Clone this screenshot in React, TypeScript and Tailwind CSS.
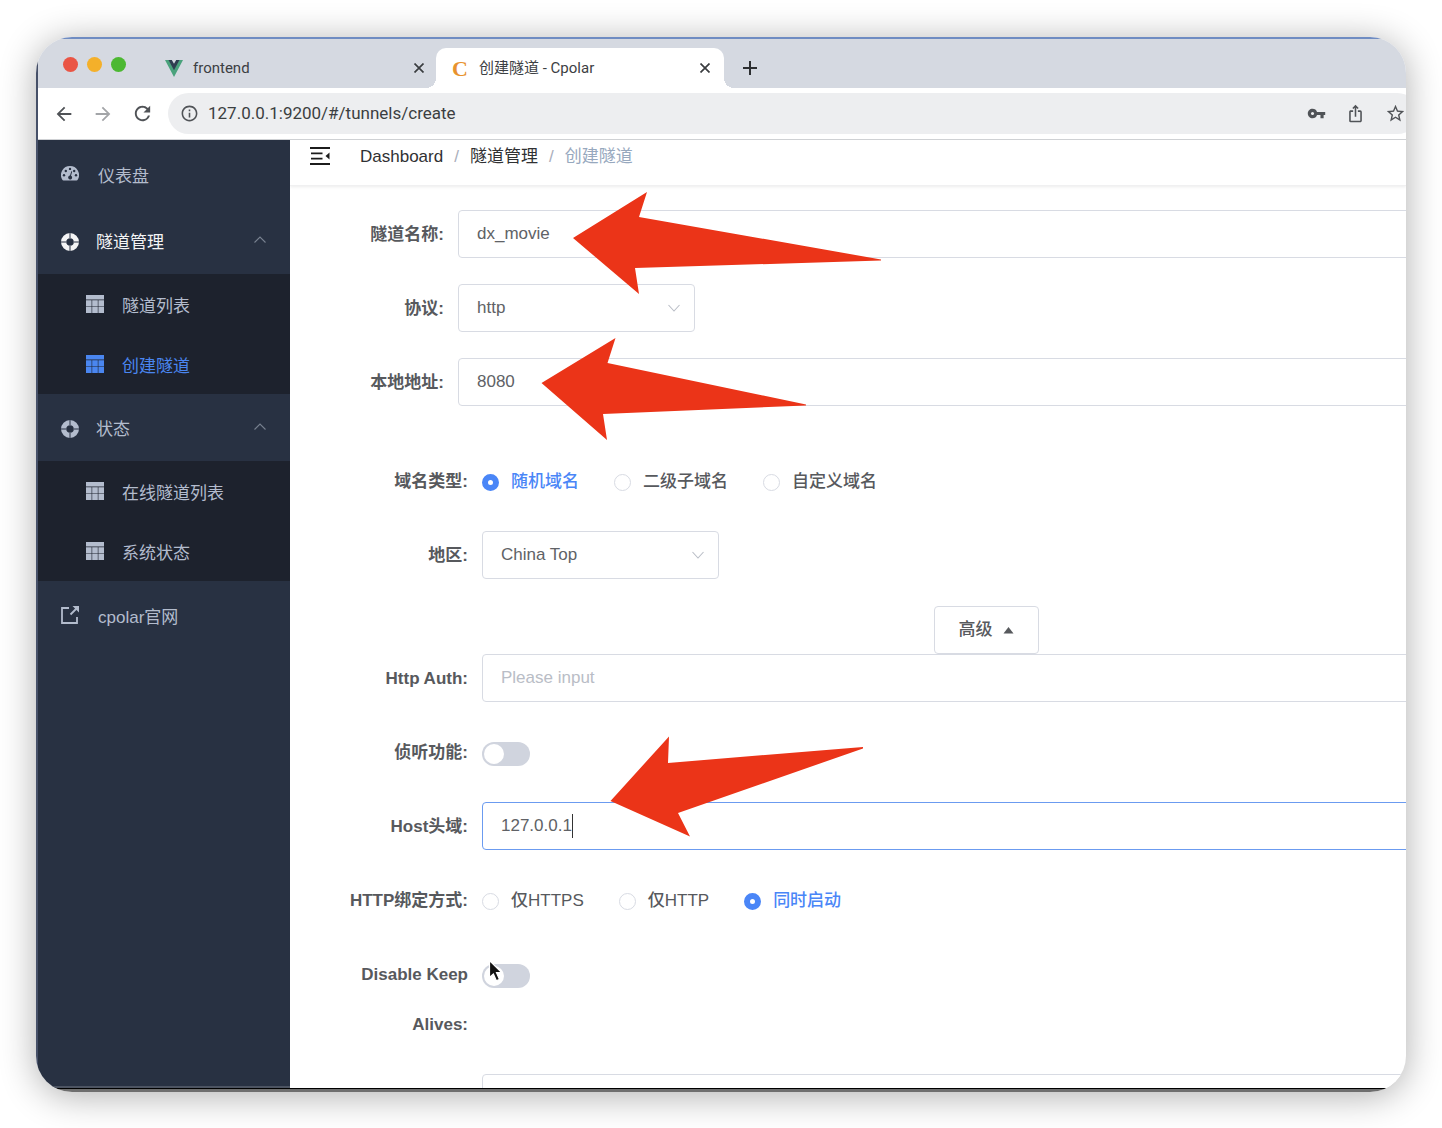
import React, { useState } from 'react';
import clsx from 'clsx';
import {
  MdArrowBack,
  MdArrowForward,
  MdInfoOutline,
  MdIosShare,
  MdRefresh,
  MdStarBorder,
  MdVpnKey,
} from 'react-icons/md';

const uiFont = "font-['Liberation_Sans','Noto_Sans_CJK_SC',sans-serif]";
const chromeFont = "font-[Roboto,'Noto_Sans_CJK_SC',sans-serif]";
const inputStyles =
  'h-12 w-full rounded-[4px] border bg-white px-[18px] text-[17px] text-[#606266] outline-none placeholder:text-[#b9bdc6]';

const VueLogo = () => (
  <svg width="18" height="17" viewBox="0 0 18 17" aria-hidden="true">
    <path d="M0 0h4l5 9 5-9h4L9 17z" fill="#4aa27c" />
    <path d="M3.500 0h3.300L9 3.800 11.200 0h3.300L9 10.200z" fill="#2f3e50" />
  </svg>
);

const CloseIcon = () => (
  <svg width="10" height="10" viewBox="0 0 10 10" stroke="#3a3d40" strokeWidth="1.7" aria-hidden="true">
    <path d="M0.500 0.500l9 9M9.500 0.500l-9 9" />
  </svg>
);

const GaugeIcon = () => (
  <svg width="18" height="15" viewBox="0 0 18 15" aria-hidden="true">
    <path d="M9 0a9 9 0 0 1 7.800 13.500c-.3.500-.7 1-1.300 1h-13c-.6 0-1-.5-1.300-1A9 9 0 0 1 9 0z" fill="currentColor" />
    <g fill="#283142">
      <circle cx="3" cy="9.200" r="1.200" />
      <circle cx="4.800" cy="5" r="1.200" />
      <circle cx="9" cy="2.900" r="1.200" />
      <circle cx="13.200" cy="5" r="1.200" />
      <circle cx="15" cy="9.200" r="1.200" />
      <path d="M10.300 5.200l.9.300-1.200 4.200a2 2 0 1 1-1-.2z" />
    </g>
  </svg>
);

const RingIcon = () => (
  <svg width="18" height="18" viewBox="0 0 18 18" aria-hidden="true">
    <circle cx="9" cy="9" r="6.400" fill="none" stroke="currentColor" strokeWidth="5.200" />
    <path d="M9 0v5M9 13v5M0 9h5M13 9h5" stroke="#283142" strokeWidth="1" />
  </svg>
);

const GridIcon = () => (
  <svg width="18" height="18" viewBox="0 0 18 18" fill="currentColor" aria-hidden="true">
    <path d="M0 0h18v4.500H0zM0 5.200h5.600v6H0zM6.200 5.200h5.600v6H6.200zM12.400 5.200H18v6h-5.600zM0 11.800h5.600V18H0zM6.200 11.800h5.600V18H6.200zM12.400 11.800H18V18h-5.600z" />
  </svg>
);

const LinkIcon = () => (
  <svg width="18" height="18" viewBox="0 0 18 18" fill="none" stroke="currentColor" strokeWidth="1.800" aria-hidden="true">
    <path d="M8 2H1v15h15v-6M9.500 8.500L16 2" />
    <path d="M11.500 0H18v6.500z" fill="currentColor" stroke="none" />
  </svg>
);

const FoldIcon = () => (
  <svg width="20" height="18" viewBox="0 0 20 18" aria-hidden="true">
    <path d="M0 1h20M1 6.300h11.500M1 11.600h11.500M0 17h20" stroke="#1c1c1c" strokeWidth="1.800" />
    <path d="M19.500 5.500v7L15.500 9z" fill="#1c1c1c" />
  </svg>
);

const Chevron: React.FC<{ className?: string; up?: boolean }> = ({ className, up }) => (
  <svg
    className={className}
    width="12"
    height="8"
    viewBox="0 0 12 8"
    fill="none"
    stroke="currentColor"
    strokeWidth="1.100"
    aria-hidden="true"
  >
    <path d={up ? 'M0.500 6.500L6 1l5.500 5.500' : 'M0.500 1L6 7l5.500-6'} />
  </svg>
);

const TabStrip = () => (
  <div className={`${chromeFont} flex h-[49px] shrink-0 items-end bg-[#d5d9e1] text-[15px] text-[#3c4043]`}>
    <div className="flex h-10 shrink-0 items-center gap-[9px] pb-2 pl-[25px]">
      <span className="size-[15px] rounded-full bg-[#ea5545]" />
      <span className="size-[15px] rounded-full bg-[#f4b02a]" />
      <span className="size-[15px] rounded-full bg-[#4cb832]" />
    </div>
    <div className="ml-[39px] flex h-10 w-[261px] shrink-0 items-center pr-[2px]">
      <VueLogo />
      <span className="ml-[10px] flex-1">frontend</span>
      <button aria-label="Close frontend">
        <CloseIcon />
      </button>
    </div>
    <div className="flex h-10 shrink-0 items-end">
      <span className="size-[10px] bg-[radial-gradient(circle_at_0_0,#d5d9e1_10px,#fff_10px)]" />
      <div className="flex h-10 w-[288px] items-center rounded-t-[10px] bg-white pr-[14px] pl-4">
        <span className="w-[27px] font-['Liberation_Serif',serif] text-[22px] font-bold text-[#e8922e]">C</span>
        <span className="flex-1">创建隧道 - Cpolar</span>
        <button aria-label="Close Cpolar">
          <CloseIcon />
        </button>
      </div>
      <span className="size-[10px] bg-[radial-gradient(circle_at_100%_0,#d5d9e1_10px,#fff_10px)]" />
    </div>
    <button aria-label="New tab" className="flex h-10 items-center pl-[9px]">
      <svg width="14" height="14" viewBox="0 0 14 14" stroke="#2d2f31" strokeWidth="2" aria-hidden="true">
        <path d="M7 0v14M0 7h14" />
      </svg>
    </button>
  </div>
);

const Toolbar = () => (
  <div className={`${chromeFont} flex h-[52px] shrink-0 items-center border-b border-[#cfd1d4] bg-white text-[#505357]`}>
    <div className="flex shrink-0 items-center gap-[17px] pl-[15px]">
      <button aria-label="Back">
        <MdArrowBack size={22} />
      </button>
      <button aria-label="Forward" className="text-[#a3a5a8]">
        <MdArrowForward size={22} />
      </button>
      <button aria-label="Reload">
        <MdRefresh size={23} />
      </button>
    </div>
    <div className="-mr-3 ml-[14px] flex h-[41px] min-w-0 flex-1 items-center rounded-full bg-[#edeef0] px-3">
      <MdInfoOutline size={19} className="shrink-0" />
      <input
        aria-label="Address"
        defaultValue="127.0.0.1:9200/#/tunnels/create"
        className="ml-[9px] min-w-0 flex-1 bg-transparent text-[17px] text-[#3b3e41] outline-none"
      />
      <div className="flex shrink-0 items-center gap-5">
        <MdVpnKey size={19} />
        <MdIosShare size={19} />
        <MdStarBorder size={21} />
      </div>
    </div>
  </div>
);

const SubItem: React.FC<{ label: string; active?: boolean }> = ({ label, active }) => (
  <a
    href="#"
    className={clsx(
      'flex h-[60px] items-center gap-[18px] bg-[#1d222d] pl-12',
      active ? 'text-[#4a86f0]' : 'text-[#b3bccd]',
    )}
  >
    <GridIcon />
    <span className="pt-1.5">{label}</span>
  </a>
);

const MenuTitle: React.FC<{ label: string; active?: boolean }> = ({ label, active }) => (
  <button
    className={clsx(
      'flex h-[67px] w-full items-center pt-[2px] pr-6 pl-[23px] text-left',
      active ? 'text-[#f4f4f5]' : 'text-[#b3bccd]',
    )}
  >
    <RingIcon />
    <span className="ml-[17px] flex-1 pt-[2px]">{label}</span>
    <Chevron up className="mb-1 text-[#77808f]" />
  </button>
);

const Sidebar = () => (
  <nav className="flex w-[252px] shrink-0 flex-col border-b-2 border-[#4d5462] bg-[#283142] text-[17px] text-[#b3bccd]">
    <a href="#" className="flex h-[67px] items-center gap-[19px] pl-[23px]">
      <GaugeIcon />
      <span className="pt-1.5">仪表盘</span>
    </a>
    <MenuTitle label="隧道管理" active />
    <SubItem label="隧道列表" />
    <SubItem label="创建隧道" active />
    <MenuTitle label="状态" />
    <SubItem label="在线隧道列表" />
    <SubItem label="系统状态" />
    <a href="#" className="flex h-[67px] items-center gap-[19px] pl-[23px]">
      <LinkIcon />
      <span className="pt-1.5">cpolar官网</span>
    </a>
  </nav>
);

const Field: React.FC<{ label: string; htmlFor?: string; wide?: boolean; children: React.ReactNode }> = ({
  label,
  htmlFor,
  wide,
  children,
}) => (
  <div className="flex">
    <label
      htmlFor={htmlFor}
      className={clsx(
        'shrink-0 pr-[14px] text-right text-[17px] leading-[50px] font-bold text-[#57595d]',
        wide ? 'w-[168px]' : 'w-36',
      )}
    >
      {label}
    </label>
    <div className="flex min-h-[50px] min-w-0 flex-1 items-start">{children}</div>
  </div>
);

const Select: React.FC<{ id: string; options: string[] }> = ({ id, options }) => (
  <div className="relative w-[237px]">
    <select id={id} className={`${inputStyles} appearance-none border-[#d8dbe3]`}>
      {options.map((option) => (
        <option key={option}>{option}</option>
      ))}
    </select>
    <Chevron className="pointer-events-none absolute top-5 right-[15px] text-[#b9bdc6]" />
  </div>
);

const RadioGroup: React.FC<{ name: string; options: string[]; initial: string }> = ({ name, options, initial }) => {
  const [value, setValue] = useState(initial);

  return (
    <div className="flex h-[50px] items-center gap-[35px]" role="radiogroup" aria-label={name}>
      {options.map((option) => (
        <label
          key={option}
          className={clsx(
            'flex items-center gap-3 text-[17px] font-medium whitespace-nowrap',
            value === option ? 'text-[#4a86f7]' : 'text-[#57595d]',
          )}
        >
          <input
            type="radio"
            name={name}
            checked={value === option}
            onChange={() => setValue(option)}
            className="size-[17px] appearance-none rounded-full border border-[#d8dbe3] bg-white checked:border-[6px] checked:border-[#4a86f7]"
          />
          {option}
        </label>
      ))}
    </div>
  );
};

const Switch: React.FC<{ id: string }> = ({ id }) => (
  <input
    id={id}
    type="checkbox"
    role="switch"
    className="mt-[14px] flex h-6 w-12 appearance-none items-center rounded-full bg-[#d0d4de] px-[2px] before:size-5 before:rounded-full before:bg-white checked:justify-end checked:bg-[#4a86f7]"
  />
);

const TunnelForm = () => (
  <form className="-mr-[84px] pt-6 pl-6">
    <div className="flex flex-col gap-6">
      <Field label="隧道名称:" htmlFor="name">
        <input id="name" defaultValue="dx_movie" className={`${inputStyles} border-[#d8dbe3]`} />
      </Field>
      <Field label="协议:" htmlFor="protocol">
        <Select id="protocol" options={['http', 'tcp']} />
      </Field>
      <Field label="本地地址:" htmlFor="address">
        <input id="address" defaultValue="8080" className={`${inputStyles} border-[#d8dbe3]`} />
      </Field>
    </div>
    <div className="mt-[49px] flex flex-col gap-6">
      <Field label="域名类型:" wide>
        <RadioGroup name="domainType" options={['随机域名', '二级子域名', '自定义域名']} initial="随机域名" />
      </Field>
      <Field label="地区:" htmlFor="region" wide>
        <Select id="region" options={['China Top', 'China VIP']} />
      </Field>
    </div>
    <div className="mt-[25px] flex justify-center pl-[168px]">
      <button
        type="button"
        className="flex h-12 items-center gap-[10px] rounded-[4px] border border-[#d8dbe3] px-6 text-[17px] font-medium text-[#57595d]"
      >
        高级
        <svg width="11" height="7" viewBox="0 0 11 7" aria-hidden="true">
          <path d="M5.500 0l5 6.500H.5z" fill="#57595d" />
        </svg>
      </button>
    </div>
    <div className="flex flex-col gap-6">
      <Field label="Http Auth:" htmlFor="auth" wide>
        <input id="auth" placeholder="Please input" className={`${inputStyles} border-[#d8dbe3]`} />
      </Field>
      <Field label="侦听功能:" htmlFor="inspect" wide>
        <Switch id="inspect" />
      </Field>
      <Field label="Host头域:" htmlFor="host" wide>
        <div className="relative w-full">
          <input id="host" defaultValue="127.0.0.1" className={`${inputStyles} border-[#6b9bf0]`} />
          <span className="absolute top-3 left-[90px] h-6 w-px bg-[#333]" />
        </div>
      </Field>
      <Field label="HTTP绑定方式:" wide>
        <RadioGroup name="bindTls" options={['仅HTTPS', '仅HTTP', '同时启动']} initial="同时启动" />
      </Field>
      <Field label="Disable Keep Alives:" htmlFor="keepAlives" wide>
        <div className="relative">
          <Switch id="keepAlives" />
          <svg className="absolute top-[9px] left-1.5" width="16" height="24" viewBox="0 0 16 24" aria-hidden="true">
            <path
              d="M1.500 1.500v17l3.900-3.600 3 6.900 3.100-1.400-3-6.700h5.200z"
              fill="#111"
              stroke="#fff"
              strokeWidth="1.200"
            />
          </svg>
        </div>
      </Field>
      <Field label="" wide>
        <input aria-label="Extra" className={`${inputStyles} border-[#d8dbe3]`} />
      </Field>
    </div>
  </form>
);

// Callouts drawn over the form, pointing at the fields to fill in
const Arrows = () => (
  <svg
    className="pointer-events-none absolute top-0 left-0"
    width="600"
    height="720"
    viewBox="290 140 600 720"
    fill="#eb3418"
    aria-hidden="true"
  >
    <path d="M573 238L647 192L639 217L881 259.500V260.500L635 268L639 294z" />
    <path d="M541.500 383L615.500 338L607.500 363L806 404.500V405.500L603 414L607 440z" />
    <path d="M610.500 801L669 736.500L668 763L863 747V748.500L678 813L690 836.500z" />
  </svg>
);

const App = () => (
  <div className="flex h-screen flex-col overflow-hidden bg-white px-9 pt-[37px] pb-9">
    <div
      className={`${uiFont} flex min-h-0 flex-1 flex-col overflow-hidden rounded-[36px] bg-white shadow-[0_4px_36px_rgba(0,0,0,0.32)]`}
    >
      <div className="flex min-h-0 flex-1 flex-col border-t-2 border-b-[3px] border-l-2 border-t-[#6f8cc2] border-b-[#6e6e6e] border-l-[#465068]">
        <TabStrip />
        <Toolbar />
        <div className="flex min-h-0 flex-1 border-b border-black">
          <Sidebar />
          <main className="relative min-w-0 flex-1 overflow-hidden">
            <header className="flex h-[46px] items-center border-b border-[#f0f0f1] pb-[14px] pl-5 text-[17px] text-[#303133] shadow-[0_1px_3px_rgba(0,0,0,0.08)]">
              <button aria-label="Toggle menu">
                <FoldIcon />
              </button>
              <ol className="ml-[30px] flex gap-[11px] pt-[2px]">
                <li>
                  <a href="#">Dashboard</a>
                </li>
                <li className="text-[#a9aebb]">/</li>
                <li>
                  <a href="#">隧道管理</a>
                </li>
                <li className="text-[#a9aebb]">/</li>
                <li className="text-[#97a8be]">创建隧道</li>
              </ol>
            </header>
            <TunnelForm />
            <Arrows />
          </main>
        </div>
      </div>
    </div>
  </div>
);

export default App;
